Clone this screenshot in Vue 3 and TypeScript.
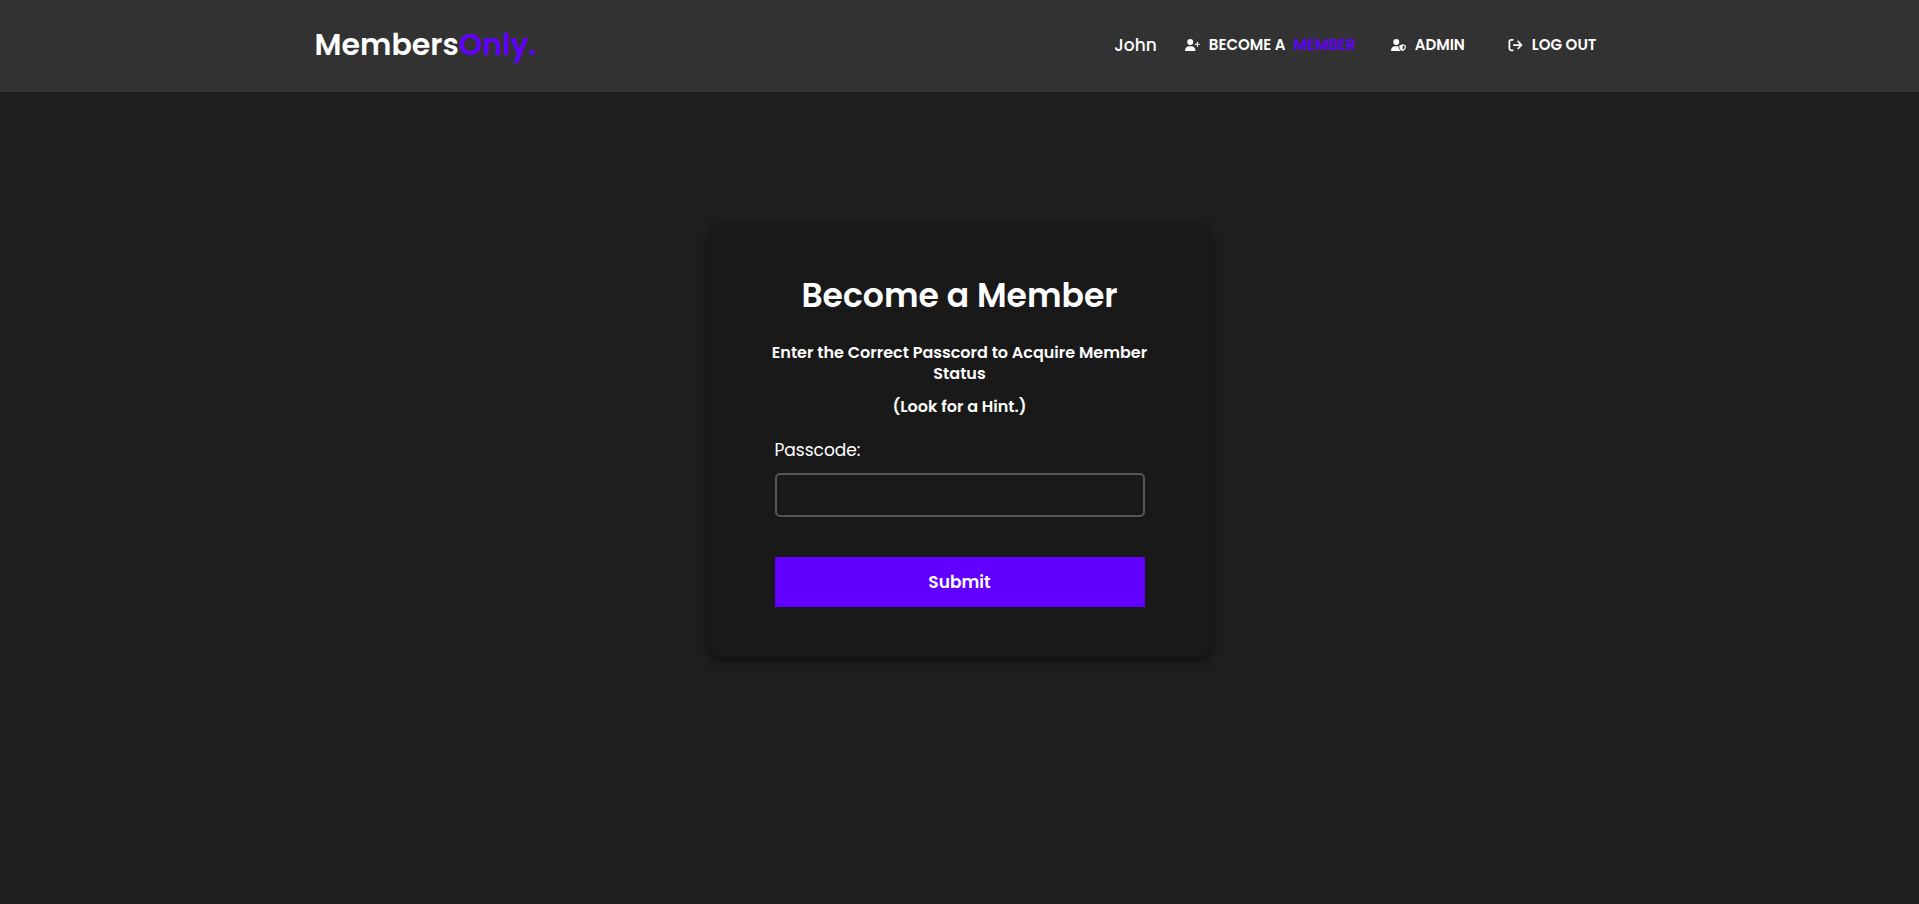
<script setup lang="ts">
import { ref } from 'vue'

interface NavLink {
  id: string
  label: string
  accent?: string
  viewBox: string
  path: string
}

const userName = 'John'
const passcode = ref('')

const links: NavLink[] = [
  {
    id: 'member',
    label: 'BECOME A',
    accent: 'MEMBER',
    viewBox: '0 0 640 512',
    path: 'M96 128a128 128 0 1 1 256 0A128 128 0 1 1 96 128zM0 482.3C0 383.8 79.8 304 178.3 304h91.4C368.2 304 448 383.8 448 482.3c0 16.4-13.3 29.7-29.7 29.7H29.7C13.3 512 0 498.7 0 482.3zM504 312V248H440c-13.3 0-24-10.7-24-24s10.7-24 24-24h64V136c0-13.3 10.7-24 24-24s24 10.7 24 24v64h64c13.3 0 24 10.7 24 24s-10.7 24-24 24H552v64c0 13.3-10.7 24-24 24s-24-10.7-24-24z',
  },
  {
    id: 'admin',
    label: 'ADMIN',
    viewBox: '0 0 640 512',
    path: 'M224 256A128 128 0 1 0 224 0a128 128 0 1 0 0 256zm-45.7 48C79.8 304 0 383.8 0 482.3C0 498.7 13.3 512 29.7 512H418.3c1.8 0 3.5-.2 5.3-.5c-76.3-55.1-99.8-141-103.1-200.2c-16.1-4.8-33.1-7.3-50.7-7.3H178.3zm308.8-78.3l-120 48C358 277.4 352 286.2 352 296c0 63.3 25.9 168.8 134.8 214.2c5.9 2.5 12.6 2.5 18.5 0C614.1 464.8 640 359.3 640 296c0-9.8-6-18.6-15.1-22.3l-120-48c-5.7-2.3-12.1-2.3-17.8 0zM591.4 312c-3.9 50.7-27.2 116.7-95.4 149.7V273.8L591.4 312z',
  },
  {
    id: 'logout',
    label: 'LOG OUT',
    viewBox: '0 0 512 512',
    path: 'M502.6 278.6c12.5-12.5 12.5-32.8 0-45.3l-128-128c-12.5-12.5-32.8-12.5-45.3 0s-12.5 32.8 0 45.3L402.7 224 192 224c-17.7 0-32 14.3-32 32s14.3 32 32 32l210.7 0-73.4 73.4c-12.5 12.5-12.5 32.8 0 45.3s32.8 12.5 45.3 0l128-128zM160 96c17.7 0 32-14.3 32-32s-14.3-32-32-32L96 32C43 32 0 75 0 128L0 384c0 53 43 96 96 96l64 0c17.7 0 32-14.3 32-32s-14.3-32-32-32l-64 0c-17.7 0-32-14.3-32-32l0-256c0-17.7 14.3-32 32-32l64 0z',
  },
]
</script>

<template>
  <div class="page">
    <header class="header">
      <div class="bar">
        <a class="logo" href="#">Members<span class="accent">Only.</span></a>
        <nav class="nav">
          <span class="user">{{ userName }}</span>
          <a v-for="link in links" :key="link.id" class="link" :class="link.id" :href="'#' + link.id">
            <svg class="icon" :viewBox="link.viewBox" aria-hidden="true"><path :d="link.path" /></svg>
            <span>{{ link.label }}</span>
            <span v-if="link.accent" class="accent">{{ link.accent }}</span>
          </a>
        </nav>
      </div>
    </header>
    <main class="main">
      <form class="card" @submit.prevent>
        <h1 class="title">Become a Member</h1>
        <p class="text">Enter the Correct Passcord to Acquire Member Status</p>
        <p class="text">(Look for a Hint.)</p>
        <label class="label" for="passcode">Passcode:</label>
        <input id="passcode" v-model="passcode" class="input" type="password" />
        <button class="submit" type="submit">Submit</button>
      </form>
    </main>
  </div>
</template>

<style>
body {
  background: #1e1e1e;
}
</style>

<style scoped>
.page {
  min-height: 100vh;
  background: #1e1e1e;
  color: #fff;
  font-family: Poppins, Inter, "Liberation Sans", sans-serif;
}

.header {
  background: #323232;
}

.bar {
  box-sizing: border-box;
  display: flex;
  align-items: center;
  justify-content: space-between;
  max-width: 1290px;
  height: 92px;
  margin: 0 auto;
  padding-bottom: 2px;
}

a {
  color: inherit;
  text-decoration: none;
}

.accent {
  color: #6200ff;
}

.logo {
  font-size: 30px;
  font-weight: 600;
  line-height: 40px;
}

.nav {
  display: flex;
  align-items: center;
  padding-right: 8px;
}

.user {
  margin-right: 28px;
  font-size: 17px;
  font-weight: 500;
}

.link {
  display: flex;
  align-items: center;
  gap: 8px;
  font-size: 15px;
  font-weight: 600;
  line-height: 20px;
}

.member {
  margin-right: 35px;
}

.admin {
  margin-right: 43px;
}

.link .icon {
  width: 15px;
  height: 14px;
  margin-right: 1px;
  fill: currentColor;
}

.main {
  display: flex;
  justify-content: center;
  padding: 131px 16px 64px;
}

.card {
  box-sizing: border-box;
  display: flex;
  flex-direction: column;
  width: 100%;
  max-width: 502px;
  padding: 51px 66px 50px;
  border-radius: 10px;
  background: #191919;
  box-shadow: 0 4px 8px rgba(0, 0, 0, 0.5);
}

.title {
  margin: 0 0 24px;
  font-size: 33px;
  font-weight: 600;
  line-height: 44px;
  text-align: center;
}

.text {
  margin: 0 -6px 12px;
  font-size: 16px;
  font-weight: 600;
  line-height: 21px;
  text-align: center;
}

.label {
  margin: 8px 0 10px;
  font-size: 17px;
  line-height: 26px;
}

.input {
  box-sizing: border-box;
  width: 100%;
  height: 44px;
  padding: 0 12px;
  border: 2px solid #555;
  border-radius: 5px;
  outline: none;
  background: transparent;
  color: inherit;
  font: inherit;
}

.submit {
  height: 50px;
  margin-top: 40px;
  padding-bottom: 2px;
  border: 0;
  background: #6200ff;
  color: inherit;
  font-family: inherit;
  font-size: 17px;
  font-weight: 600;
  cursor: pointer;
}
</style>
